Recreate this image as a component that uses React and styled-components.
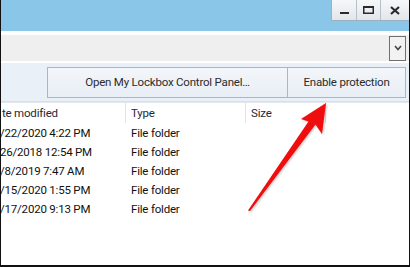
import React from "react";
import styled, { createGlobalStyle } from "styled-components";

const Global = createGlobalStyle`
  html, body { margin: 0; padding: 0; background: #fff; }
  body { font-family: Roboto, "Noto Sans", sans-serif; }
`;

const Frame = styled.div`
  position: relative;
  width: 410px;
  height: 267px;
  box-sizing: border-box;
  border-left: 1px solid #111;
  border-right: 1px solid #111;
  border-bottom: 2px solid #111;
  overflow: hidden;
  background: #fff;
  display: flex;
  flex-direction: column;
  font-size: 11.5px;
  letter-spacing: -0.2px;
`;

const TitleBar = styled.div`
  height: 31px;
  background: #89c6e8;
  display: flex;
  justify-content: flex-end;
  align-items: flex-start;
  flex: none;
`;

const WinControls = styled.div`
  display: flex;
  height: 21px;
  border: 1px solid #9fb1bf;
  border-top: none;
  border-right: none;
  box-sizing: border-box;
`;

const WinButton = styled.div`
  width: ${(p) => p.$w}px;
  height: 100%;
  box-sizing: border-box;
  background: linear-gradient(#f6f7f9, #e2e6ea);
  border-left: ${(p) => (p.$first ? "none" : "1px solid #b4c0ca")};
  display: flex;
  align-items: center;
  justify-content: center;
`;

const AddressBar = styled.div`
  height: 26px;
  margin-top: 4px;
  background: #efefef;
  display: flex;
  justify-content: flex-end;
  align-items: center;
  padding-right: 3px;
  flex: none;
`;

const Dropdown = styled.div`
  width: 17px;
  height: 25px;
  box-sizing: border-box;
  border: 1px solid #6f6f6f;
  background: #f2f2f2;
  display: flex;
  align-items: center;
  justify-content: center;
`;

const Toolbar = styled.div`
  height: 38px;
  margin-top: 2px;
  background: #e9f0f7;
  border-bottom: 1px solid #d6dfe8;
  display: flex;
  justify-content: flex-end;
  align-items: center;
  padding-right: 3px;
  flex: none;
`;

const ToolButton = styled.div`
  width: ${(p) => p.$w}px;
  height: 31px;
  box-sizing: border-box;
  border: 1px solid #aeb5bb;
  border-left-width: ${(p) => (p.$joined ? "0" : "1px")};
  background: linear-gradient(#f3f6fa, #e8eef5);
  display: flex;
  align-items: center;
  justify-content: center;
  color: #2b2b2b;
`;

const List = styled.div`
  flex: 1;
  margin-left: -2px;
`;

const Grid = styled.div`
  display: grid;
  grid-template-columns: 127px 120px 80px;
  align-items: center;
`;

const HeaderRow = styled(Grid)`
  height: 20px;
  border-top: 1px solid #e4eaf0;
`;

const HeadCell = styled.div`
  height: 100%;
  display: flex;
  align-items: center;
  padding-left: ${(p) => p.$pad}px;
  border-right: 1px solid #e3e3e3;
  color: #1e2a38;
  white-space: nowrap;
  overflow: hidden;
`;

const Row = styled(Grid)`
  height: 19px;
`;

const Cell = styled.div`
  padding-left: ${(p) => p.$pad}px;
  color: #111;
  white-space: nowrap;
  overflow: hidden;
`;

const ArrowLayer = styled.svg`
  position: absolute;
  left: 0;
  top: 0;
  pointer-events: none;
`;

const rows = [
  "/22/2020 4:22 PM",
  "26/2018 12:54 PM",
  "/8/2019 7:47 AM",
  "/15/2020 1:55 PM",
  "/17/2020 9:13 PM",
];

export default function App() {
  return (
    <>
      <Global />
      <Frame>
        <TitleBar>
          <WinControls>
            <WinButton $w={24} $first>
              <svg width="10" height="10" viewBox="0 0 10 10">
                <rect x="1" y="7" width="9" height="2" fill="#2a2a2a" />
              </svg>
            </WinButton>
            <WinButton $w={24}>
              <svg width="11" height="8" viewBox="0 0 11 8">
                <rect x="0.75" y="0.75" width="9.5" height="6.5" fill="none" stroke="#2a2a2a" strokeWidth="1.5" />
                <rect x="0" y="0" width="11" height="2" fill="#2a2a2a" />
              </svg>
            </WinButton>
            <WinButton $w={29}>
              <svg width="10" height="9" viewBox="0 0 10 9">
                <path d="M1 1 L9 8 M9 1 L1 8" stroke="#2a2a2a" strokeWidth="2.2" />
              </svg>
            </WinButton>
          </WinControls>
        </TitleBar>
        <AddressBar>
          <Dropdown>
            <svg width="8" height="6" viewBox="0 0 8 6">
              <path d="M1 1 L4 4.5 L7 1" fill="none" stroke="#444" strokeWidth="1.6" />
            </svg>
          </Dropdown>
        </AddressBar>
        <Toolbar>
          <ToolButton $w={241}>Open My Lockbox Control Panel…</ToolButton>
          <ToolButton $w={118} $joined>Enable protection</ToolButton>
        </Toolbar>
        <List>
          <HeaderRow>
            <HeadCell $pad={3}>te modified</HeadCell>
            <HeadCell $pad={5}>Type</HeadCell>
            <HeadCell $pad={5}>Size</HeadCell>
          </HeaderRow>
          {rows.map((d) => (
            <Row key={d}>
              <Cell $pad={1}>{d}</Cell>
              <Cell $pad={5}>File folder</Cell>
              <Cell $pad={5}></Cell>
            </Row>
          ))}
        </List>
        <ArrowLayer width="410" height="267" viewBox="0 0 410 267">
          <defs>
            <filter id="sh" x="-20%" y="-20%" width="140%" height="140%">
              <feDropShadow dx="1" dy="1" stdDeviation="1.2" floodColor="#000" floodOpacity="0.25" />
            </filter>
          </defs>
          <path
            d="M325 103 L321 134 L314.5 124.5 L249 211 L247 210.5 L307.5 121.5 L300 119 Z"
            fill="#f00a0a"
            filter="url(#sh)"
          />
        </ArrowLayer>
      </Frame>
    </>
  );
}
